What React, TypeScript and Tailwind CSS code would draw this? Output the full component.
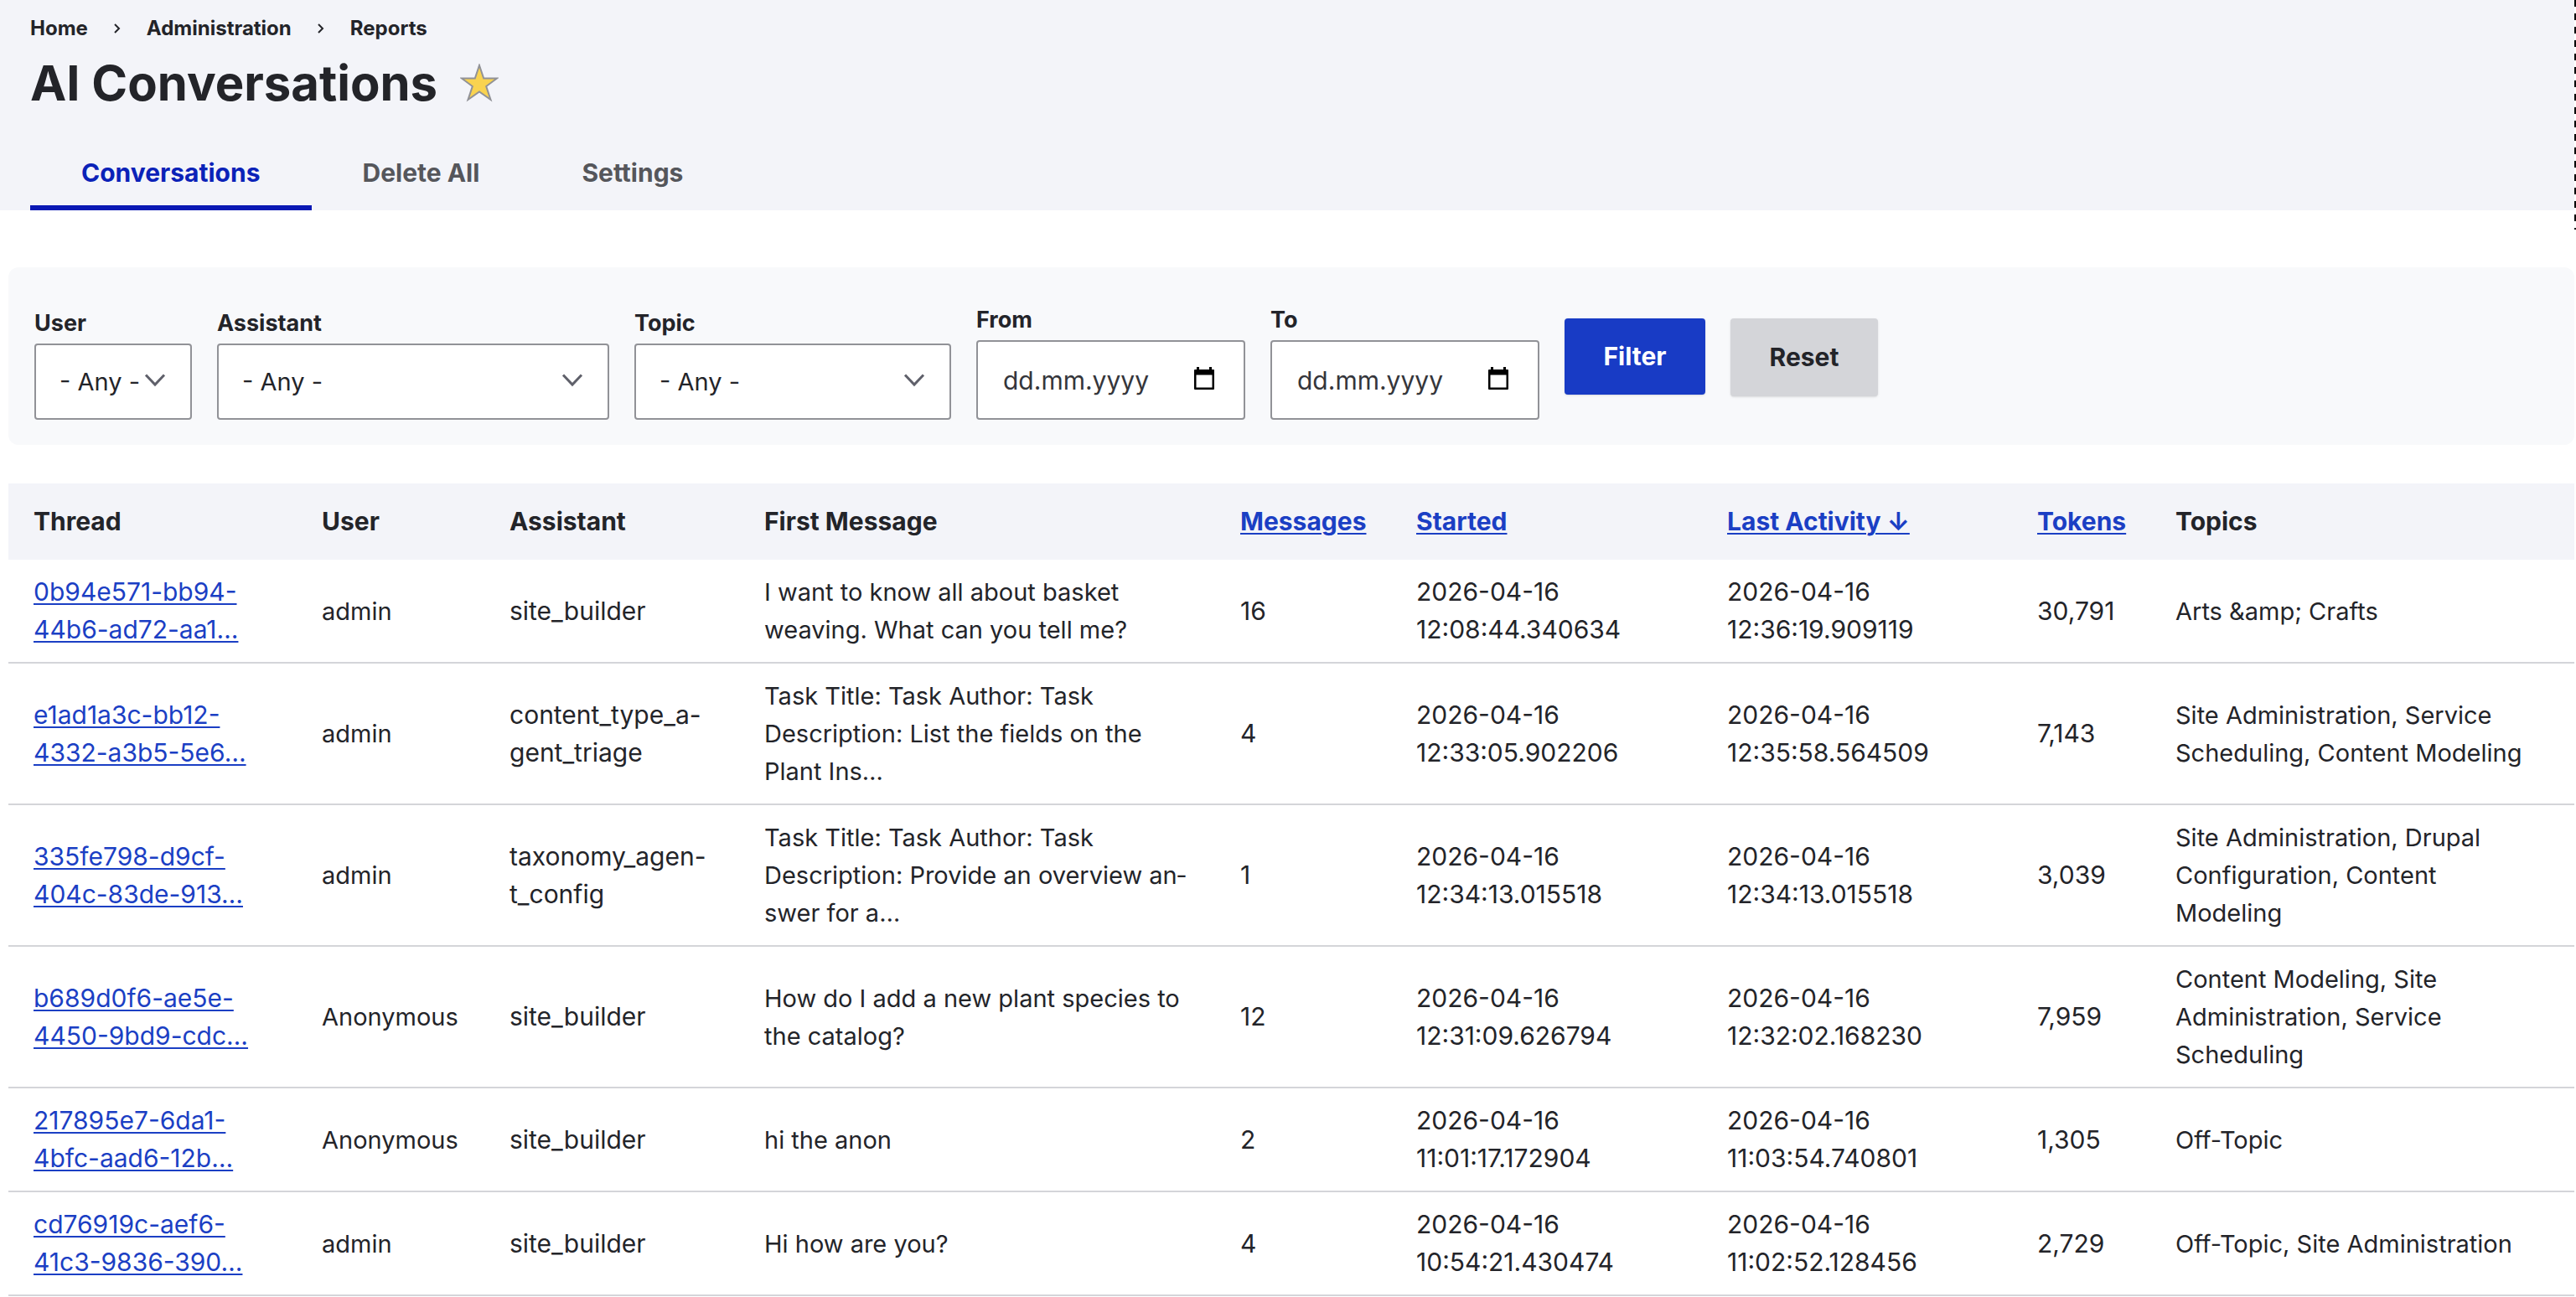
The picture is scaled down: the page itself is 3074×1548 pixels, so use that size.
import React from 'react';

const crumbs = ['Home', 'Administration', 'Reports'];

const tabs = [
  { label: 'Conversations', active: true },
  { label: 'Delete All', active: false },
  { label: 'Settings', active: false },
];

const rows = [
  { thread: ['0b94e571-bb94-', '44b6-ad72-aa1…'], user: 'admin', assistant: ['site_builder'], message: 'I want to know all about basket weaving. What can you tell me?', count: '16', started: ['2026-04-16', '12:08:44.340634'], last: ['2026-04-16', '12:36:19.909119'], tokens: '30,791', topics: 'Arts &amp; Crafts' },
  { thread: ['e1ad1a3c-bb12-', '4332-a3b5-5e6…'], user: 'admin', assistant: ['content_type_a-', 'gent_triage'], message: 'Task Title: Task Author: Task Description: List the fields on the Plant Ins…', count: '4', started: ['2026-04-16', '12:33:05.902206'], last: ['2026-04-16', '12:35:58.564509'], tokens: '7,143', topics: 'Site Administration, Service Scheduling, Content Modeling' },
  { thread: ['335fe798-d9cf-', '404c-83de-913…'], user: 'admin', assistant: ['taxonomy_agen-', 't_config'], message: 'Task Title: Task Author: Task Description: Provide an overview an\u00adswer for a…', count: '1', started: ['2026-04-16', '12:34:13.015518'], last: ['2026-04-16', '12:34:13.015518'], tokens: '3,039', topics: 'Site Administration, Drupal Configuration, Content Modeling' },
  { thread: ['b689d0f6-ae5e-', '4450-9bd9-cdc…'], user: 'Anonymous', assistant: ['site_builder'], message: 'How do I add a new plant species to the catalog?', count: '12', started: ['2026-04-16', '12:31:09.626794'], last: ['2026-04-16', '12:32:02.168230'], tokens: '7,959', topics: 'Content Modeling, Site Administration, Service Scheduling' },
  { thread: ['217895e7-6da1-', '4bfc-aad6-12b…'], user: 'Anonymous', assistant: ['site_builder'], message: 'hi the anon', count: '2', started: ['2026-04-16', '11:01:17.172904'], last: ['2026-04-16', '11:03:54.740801'], tokens: '1,305', topics: 'Off-Topic' },
  { thread: ['cd76919c-aef6-', '41c3-9836-390…'], user: 'admin', assistant: ['site_builder'], message: 'Hi how are you?', count: '4', started: ['2026-04-16', '10:54:21.430474'], last: ['2026-04-16', '11:02:52.128456'], tokens: '2,729', topics: 'Off-Topic, Site Administration' },
];

function Lines({ parts }: { parts: string[] }) {
  return (
    <>
      {parts.map((part, i) => (
        <React.Fragment key={part}>
          {i > 0 && <br />}
          {part}
        </React.Fragment>
      ))}
    </>
  );
}

function SelectField({ id, label, width }: { id: string; label: string; width: string }) {
  return (
    <div className={width}>
      <label htmlFor={id} className="block pb-[8px] text-[27px] leading-[32px] font-bold">{label}</label>
      <div className="relative">
        <select id={id} className="block h-[91px] w-full appearance-none rounded-[4px] border-2 border-[#919297] bg-white pl-[28px] text-[29px]">
          <option>- Any -</option>
        </select>
        <svg className="pointer-events-none absolute top-[36px] right-[31px] h-[16px] w-[26px]" viewBox="0 0 26 16" fill="none" stroke="#5f606a" strokeWidth="3" aria-hidden="true">
          <path d="M2 1.500L13 13L24 1.500" />
        </svg>
      </div>
    </div>
  );
}

function DateField({ id, label }: { id: string; label: string }) {
  return (
    <div className="w-[321px]">
      <label htmlFor={id} className="block pb-[8px] text-[27px] leading-[32px] font-bold">{label}</label>
      <div className="relative">
        <input id={id} type="text" placeholder="dd.mm.yyyy" className="block h-[95px] w-full rounded-[4px] border-2 border-[#919297] bg-white pl-[30px] text-[30px] placeholder:text-[#35363b]" />
        <svg className="pointer-events-none absolute top-[32px] right-[37px] h-[27px] w-[24px]" viewBox="0 0 24 27" aria-hidden="true">
          <path fill="#000" fillRule="evenodd" d="M3 0h3v3h12V0h3v3h2a1 1 0 0 1 1 1v22a1 1 0 0 1-1 1H1a1 1 0 0 1-1-1V4a1 1 0 0 1 1-1h2zM2.500 9.500v15h19v-15z" />
        </svg>
      </div>
    </div>
  );
}

const linkClass = 'text-[#1b3fc4] underline decoration-2 underline-offset-[3px]';

export default function App() {
  return (
    <div className="relative min-h-screen bg-white font-['Inter',sans-serif] text-[30px] leading-[45px] text-[#232429]">
      <header className="mr-[2px] bg-[#f3f4f9] px-[36px] pt-[18px]">
        <nav aria-label="Breadcrumb">
          <ol className="flex items-center text-[24px] leading-[32px] font-bold">
            {crumbs.map((crumb, i) => (
              <li key={crumb} className="flex items-center">
                {i > 0 && (
                  <svg className="mx-[30px] h-[12px] w-[10px]" viewBox="0 0 10 12" fill="none" stroke="#232429" strokeWidth="2" aria-hidden="true">
                    <path d="M2 1L7 6L2 11" />
                  </svg>
                )}
                <a href="#">{crumb}</a>
              </li>
            ))}
          </ol>
        </nav>
        <div className="flex items-center gap-[27px] pt-[13px]">
          <h1 className="text-[58px] leading-[72px] font-bold">AI Conversations</h1>
          <button type="button" aria-label="Remove from shortcuts">
            <svg className="h-[46px] w-[46px]" viewBox="0 0 46 46" aria-hidden="true">
              <path d="M23 2L28.200 17.500H44L31.200 27L36.500 43L23 33.500L9.500 43L14.800 27L2 17.500H17.800Z" fill="#f9d350" stroke="#919297" strokeWidth="2" />
            </svg>
          </button>
        </div>
        <nav aria-label="Primary tabs" className="flex pt-[27px]">
          {tabs.map((tab) => (
            <a key={tab.label} href="#" className={tab.active ? 'border-b-[6px] border-[#0a18b4] px-[61px] pt-[22px] pb-[16px] font-bold text-[#0b22b8]' : 'border-b-[6px] border-transparent px-[61px] pt-[22px] pb-[16px] font-bold text-[#55565b]'}>
              {tab.label}
            </a>
          ))}
        </nav>
      </header>
      <div className="pointer-events-none absolute top-0 right-0 h-[274px] w-[2px] bg-[repeating-linear-gradient(#000_0px,#000_8px,#fff_8px,#fff_16px)]" />

      <main className="mr-[2px] ml-[10px] pt-[68px]">
        <form className="flex items-end gap-[30px] rounded-[12px] bg-[#f8f9fb] px-[31px] pt-[47px] pb-[30px]">
          <SelectField id="user" label="User" width="w-[188px]" />
          <SelectField id="assistant" label="Assistant" width="w-[468px]" />
          <SelectField id="topic" label="Topic" width="w-[378px]" />
          <DateField id="from" label="From" />
          <DateField id="to" label="To" />
          <button type="button" className="mb-[30px] h-[91px] w-[168px] rounded-[4px] bg-[#183bc5] font-bold text-white shadow-sm">Filter</button>
          <button type="button" className="mb-[28px] h-[93px] w-[176px] rounded-[4px] bg-[#d4d5d9] font-bold shadow-sm">Reset</button>
        </form>

        <table className="mt-[46px] w-full table-fixed border-collapse text-left">
          <colgroup>
            <col className="w-[344px]" />
            <col className="w-[224px]" />
            <col className="w-[304px]" />
            <col className="w-[568px]" />
            <col className="w-[210px]" />
            <col className="w-[371px]" />
            <col className="w-[370px]" />
            <col className="w-[165px]" />
            <col className="w-[506px]" />
          </colgroup>
          <thead>
            <tr className="h-[91px] bg-[#f3f4f9] [&>th]:pl-[30px] [&>th]:font-bold">
              <th>Thread</th>
              <th>User</th>
              <th>Assistant</th>
              <th>First Message</th>
              <th><a href="#" className={linkClass}>Messages</a></th>
              <th><a href="#" className={linkClass}>Started</a></th>
              <th><a href="#" className={linkClass}>Last Activity ↓</a></th>
              <th><a href="#" className={linkClass}>Tokens</a></th>
              <th>Topics</th>
            </tr>
          </thead>
          <tbody>
            {rows.map((row) => (
              <tr key={row.thread[0]} className="border-b-2 border-[#d4d5d9] [&>td]:py-[16px] [&>td]:pl-[30px]">
                <td><a href="#" className={linkClass}><Lines parts={row.thread} /></a></td>
                <td className="text-[29px]">{row.user}</td>
                <td><Lines parts={row.assistant} /></td>
                <td className="pr-[28px] text-[29px]">{row.message}</td>
                <td>{row.count}</td>
                <td><Lines parts={row.started} /></td>
                <td><Lines parts={row.last} /></td>
                <td>{row.tokens}</td>
                <td className="pr-[40px] text-[29px]">{row.topics}</td>
              </tr>
            ))}
          </tbody>
        </table>
      </main>
    </div>
  );
}
